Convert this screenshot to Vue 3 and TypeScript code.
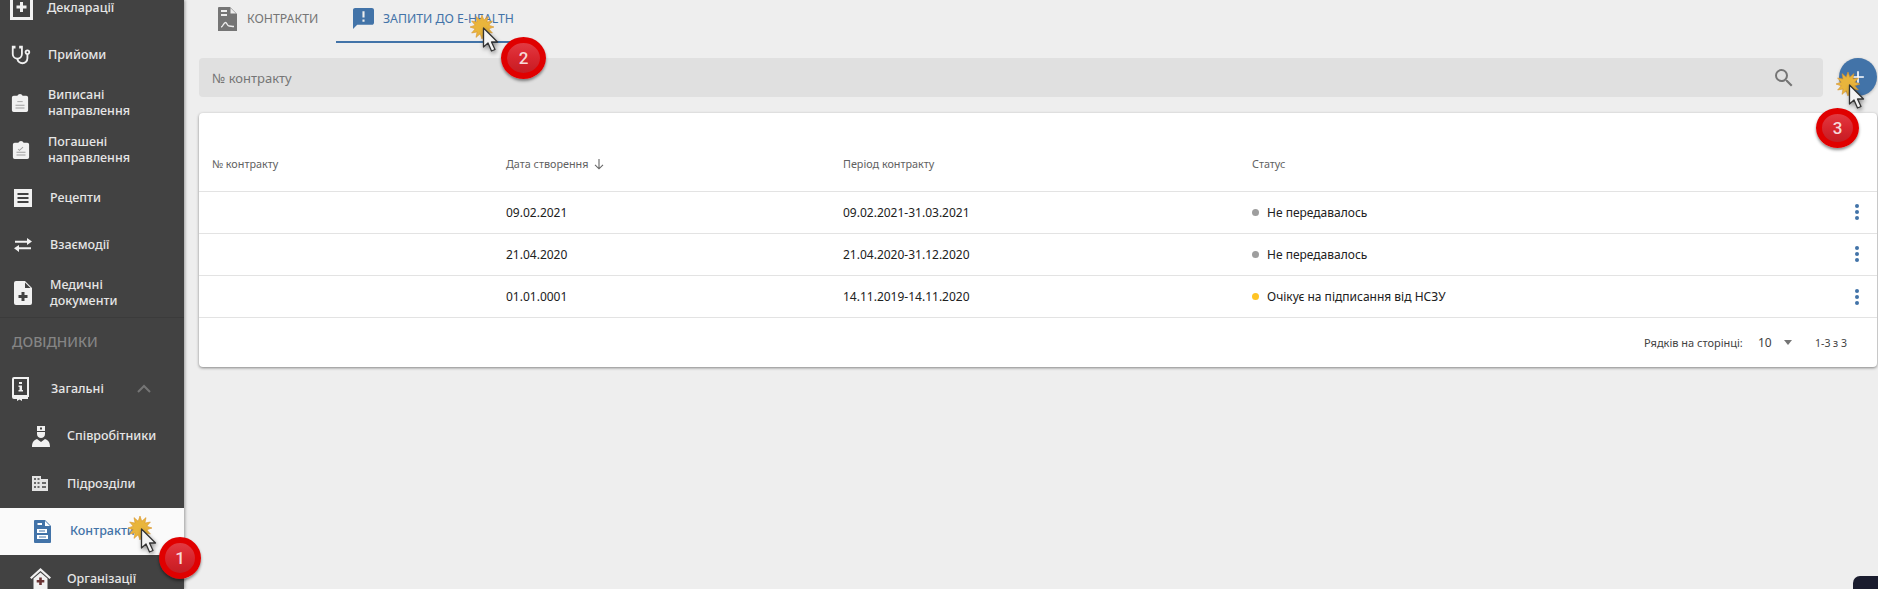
<script setup lang="ts">
interface Shape { d: string; fill: string }
interface NavIcon { box: string; w: number; h: number; shapes: Shape[] }
interface NavItem { label: string[]; pad: number; gap: number; icon: NavIcon; active?: boolean; chevron?: boolean }

const W = '#f1f1f1'
const D = '#424242'
const B = '#4273a8'

const clip: Shape[] = [
  { d: 'M12 1C10.7 1 9.6 1.84 9.18 3H5A2 2 0 0 0 3 5V19A2 2 0 0 0 5 21H19A2 2 0 0 0 21 19V5A2 2 0 0 0 19 3H14.82C14.4 1.84 13.3 1 12 1Z', fill: W },
  { d: 'M7 13H17V14H7ZM7 16H17V17H7Z', fill: '#9e9e9e' },
]

const top: NavItem[] = [
  { label: ['Декларації'], pad: 10, gap: 14, icon: { box: '0 0 23 24', w: 23, h: 24, shapes: [
    { d: 'M0 0H23V24H0Z', fill: W }, { d: 'M3 0H20V21H3Z', fill: D }, { d: 'M10 6H13V9.5H16.5V12.5H13V16H10V12.5H6.5V9.5H10Z', fill: W },
  ] } },
  { label: ['Прийоми'], pad: 10, gap: 16, icon: { box: '0 0 24 24', w: 22, h: 22, shapes: [
    { d: 'M19,8C19.56,8 20,8.43 20,9A1,1 0 0,1 19,10C18.43,10 18,9.55 18,9C18,8.43 18.43,8 19,8M2,2V11C2,13.96 4.19,16.5 7.14,16.91C7.76,19.92 10.42,22 13.5,22A6.5,6.5 0 0,0 20,15.5V11.81C21.16,11.39 22,10.29 22,9A3,3 0 0,0 19,6A3,3 0 0,0 16,9C16,10.29 16.84,11.4 18,11.81V15.41C18,17.91 16,19.91 13.5,19.91C11.5,19.91 9.82,18.7 9.22,16.9C12,16.3 14,13.8 14,11V2H10V5H12V11A4,4 0 0,1 8,15A4,4 0 0,1 4,11V5H6V2H2Z', fill: W },
  ] } },
  { label: ['Виписані', 'направлення'], pad: 11, gap: 19, icon: { box: '2 0 20 22', w: 18, h: 20, shapes: [...clip, { d: 'M9 9H15V10H9Z', fill: '#9e9e9e' }] } },
  { label: ['Погашені', 'направлення'], pad: 12, gap: 18, icon: { box: '2 0 20 22', w: 18, h: 20, shapes: [...clip, { d: 'M9 9.5L10.2 10.7L14 7.5L14.6 8.2L10.2 12L8.4 10.2Z', fill: '#9e9e9e' }] } },
  { label: ['Рецепти'], pad: 14, gap: 18, icon: { box: '0 0 18 18', w: 18, h: 18, shapes: [
    { d: 'M0 0H18V18H0Z', fill: W }, { d: 'M3.5 4H14.5V6H3.5ZM3.5 8H14.5V10H3.5ZM3.5 12H14.5V14H3.5Z', fill: D },
  ] } },
  { label: ['Взаємодії'], pad: 14, gap: 18, icon: { box: '0 0 18 14', w: 18, h: 14, shapes: [
    { d: 'M13 0L18 3.5L13 7V4.7H1V2.7H13ZM5 7V9.3H17V11.3H5V14L0 10.3Z', fill: W },
  ] } },
  { label: ['Медичні', 'документи'], pad: 14, gap: 18, icon: { box: '0 0 18 24', w: 18, h: 24, shapes: [
    { d: 'M2 0H11L18 7V22A2 2 0 0 1 16 24H2A2 2 0 0 1 0 22V2A2 2 0 0 1 2 0Z', fill: W }, { d: 'M11 1.5V7H16.5Z', fill: D },
    { d: 'M7.5 11H10.5V14H13.5V17H10.5V20H7.5V17H4.5V14H7.5Z', fill: D },
  ] } },
]

const bottom: NavItem[] = [
  { label: ['Загальні'], pad: 12, gap: 22, chevron: true, icon: { box: '0 0 17 24', w: 17, h: 24, shapes: [
    { d: 'M2 0H17V20H16V22H10V24L7.5 22.5L5 24V22H2A2 2 0 0 1 0 20V2A2 2 0 0 1 2 0Z', fill: W },
    { d: 'M2 2H15V18H2Z', fill: D },
    { d: 'M7 5H10V7H7ZM6.5 8.5H10V13H11V14.5H6.5V13H7.5V10H6.5Z', fill: W },
  ] } },
  { label: ['Співробітники'], pad: 32, gap: 17, icon: { box: '0 0 18 21', w: 18, h: 21, shapes: [
    { d: 'M5 0H13V5H5Z', fill: W }, { d: 'M5 6H13V8C13 10.5 11 12 9 12C7 12 5 10.5 5 8Z', fill: W },
    { d: 'M5 13L9 16L13 13C16 14 18 16 18 21H0C0 16 2 14 5 13Z', fill: W }, { d: 'M8 1.5H10V3.5H8Z', fill: D },
  ] } },
  { label: ['Підрозділи'], pad: 32, gap: 19, icon: { box: '0 0 16 15', w: 16, h: 15, shapes: [
    { d: 'M0 0H9V3H16V15H0Z', fill: '#e4e4e4' },
    { d: 'M2 2H4V4H2ZM5.5 2H7.5V4H5.5ZM2 6H4V8H2ZM5.5 6H7.5V8H5.5ZM10 6H14V8H10ZM2 10H4V12H2ZM5.5 10H7.5V12H5.5ZM10 10H14V12H10Z', fill: '#6a6a6a' },
  ] } },
  { label: ['Контракти'], pad: 34, gap: 19, active: true, icon: { box: '0 0 17 23', w: 17, h: 23, shapes: [
    { d: 'M1 0H11L17 6V22A1 1 0 0 1 16 23H1A1 1 0 0 1 0 22V1A1 1 0 0 1 1 0Z', fill: B },
    { d: 'M11 1V6H16Z', fill: '#fff' },
    { d: 'M3.5 3H8V5H3.5ZM3 9H13V13H3ZM5 10.5V11.5H11V10.5ZM3 15H14V19H3ZM5 16.5V17.5H12V16.5Z', fill: '#fff' },
  ] } },
  { label: ['Організації'], pad: 30, gap: 16, icon: { box: '0 0 21 21', w: 21, h: 21, shapes: [
    { d: 'M10.5 0L21 9.5L19.5 11L10.5 3L1.5 11L0 9.5Z', fill: W },
    { d: 'M3.5 10.5L10.5 4.5L17.5 10.5V21H3.5Z', fill: W },
    { d: 'M9.2 9.5H11.8V12H14.3V14.5H11.8V17H9.2V14.5H6.7V12H9.2Z', fill: '#6a3434' },
  ] } },
]

const rows = [
  { created: '09.02.2021', period: '09.02.2021-31.03.2021', status: 'Не передавалось', tone: 'grey' },
  { created: '21.04.2020', period: '21.04.2020-31.12.2020', status: 'Не передавалось', tone: 'grey' },
  { created: '01.01.0001', period: '14.11.2019-14.11.2020', status: 'Очікує на підписання від НСЗУ', tone: 'amber' },
]

const starPoints = (() => {
  const pts: string[] = []
  for (let i = 0; i < 24; i++) {
    const r = i % 2 === 0 ? 12 : 7
    const a = (Math.PI * 2 * i) / 24
    pts.push(`${(12 + r * Math.cos(a)).toFixed(2)},${(12 + r * Math.sin(a)).toFixed(2)}`)
  }
  return pts.join(' ')
})()

const marks = [
  { id: 1, cls: 'm1', n: '1' },
  { id: 2, cls: 'm2', n: '2' },
  { id: 3, cls: 'm3', n: '3' },
]
</script>

<template>
  <div class="page">
    <aside class="side">
      <nav class="nav">
        <a v-for="it in top" :key="it.label[0]" class="item" :style="{ paddingLeft: it.pad + 'px' }">
          <span class="ico" :style="{ width: it.icon.w + 'px', marginRight: it.gap + 'px' }">
            <svg :width="it.icon.w" :height="it.icon.h" :viewBox="it.icon.box"><path v-for="(s, i) in it.icon.shapes" :key="i" :d="s.d" :fill="s.fill" /></svg>
          </span>
          <span class="lbl"><span v-for="l in it.label" :key="l" class="ln">{{ l }}</span></span>
        </a>
        <div class="section">ДОВІДНИКИ</div>
        <a v-for="it in bottom" :key="it.label[0]" class="item" :class="{ active: it.active }" :style="{ paddingLeft: it.pad + 'px' }">
          <span class="ico" :style="{ width: it.icon.w + 'px', marginRight: it.gap + 'px' }">
            <svg :width="it.icon.w" :height="it.icon.h" :viewBox="it.icon.box"><path v-for="(s, i) in it.icon.shapes" :key="i" :d="s.d" :fill="s.fill" /></svg>
          </span>
          <span class="lbl"><span v-for="l in it.label" :key="l" class="ln">{{ l }}</span></span>
          <svg v-if="it.chevron" class="chev" width="14" height="9" viewBox="0 0 14 9"><path d="M1 8L7 2L13 8" fill="none" stroke="#757575" stroke-width="2" /></svg>
        </a>
      </nav>
    </aside>

    <main class="main">
      <div class="tabs">
        <div class="tab first">
          <svg width="19" height="24" viewBox="0 0 19 24"><path d="M1 0H12L19 7V24H0V1A1 1 0 0 1 1 0Z" fill="#757575" /><path d="M12.5 1V6.5H18Z" fill="#eee" /><path d="M3 3H9V5H3ZM3 7H9V9H3Z" fill="#eee" /><path d="M3 20C5 20 5.5 15.5 7.5 15.5C9 15.5 9 19 11 19C12.5 19 14 19.5 16 19.5" fill="none" stroke="#eee" stroke-width="1.4" /></svg>
          <span>КОНТРАКТИ</span>
        </div>
        <div class="tab on">
          <svg width="21" height="21" viewBox="2 2 20 20"><path d="M20 2H4c-1.1 0-1.99.9-1.99 2L2 22l4-4h14c1.1 0 2-.9 2-2V4c0-1.1-.9-2-2-2zm-7 9h-2V5h2v6zm0 4h-2v-2h2v2z" fill="#4273a8" /></svg>
          <span>ЗАПИТИ ДО E-HEALTH</span>
        </div>
      </div>

      <div class="tools">
        <div class="search">
          <span class="ph">№ контракту</span>
          <svg width="24" height="24" viewBox="0 0 24 24"><path d="M15.5 14h-.79l-.28-.27A6.47 6.47 0 0 0 16 9.5 6.5 6.5 0 1 0 9.5 16c1.61 0 3.09-.59 4.23-1.57l.27.28v.79l5 4.99L20.49 19l-4.99-5zm-6 0C7.01 14 5 11.99 5 9.5S7.01 5 9.5 5 14 7.01 14 9.5 11.99 14 9.5 14z" fill="#757575" /></svg>
        </div>
        <button class="fab" type="button">
          <svg width="20" height="20" viewBox="0 0 24 24"><path d="M19 13h-6v6h-2v-6H5v-2h6V5h2v6h6v2z" fill="#fff" /></svg>
        </button>
      </div>

      <section class="card">
        <div class="row head">
          <div class="c c1">№ контракту</div>
          <div class="c c2">Дата створення
            <svg width="12" height="12" viewBox="0 0 12 12"><path d="M6 1V10.5M2 6.8L6 10.8L10 6.8" fill="none" stroke="#666" stroke-width="1.1" /></svg>
          </div>
          <div class="c c3">Період контракту</div>
          <div class="c c4">Статус</div>
        </div>
        <div v-for="r in rows" :key="r.created" class="row body">
          <div class="c c1"></div>
          <div class="c c2">{{ r.created }}</div>
          <div class="c c3">{{ r.period }}</div>
          <div class="c c4"><i class="dot" :class="r.tone"></i>{{ r.status }}</div>
          <div class="kebab"><i></i><i></i><i></i></div>
        </div>
        <footer class="foot">
          <span class="f-l">Рядків на сторінці:</span>
          <span class="f-n">10</span>
          <i class="f-a"></i>
          <span class="f-r">1-3 з 3</span>
        </footer>
      </section>
    </main>

    <div v-for="m in marks" :key="m.id" class="mark" :class="m.cls">
      <svg class="star" width="24" height="24" viewBox="0 0 24 24"><polygon :points="starPoints" fill="#e9b53c" stroke="#d9942a" stroke-width=".6" /></svg>
      <svg class="cursor" width="18" height="26" viewBox="0 0 18 26"><path d="M1.5 1V20L6 16L9.5 24L13 22.5L9.5 15H15.5Z" fill="#f4f4f4" stroke="#333" stroke-width="1.3" stroke-linejoin="round" /></svg>
      <div class="badge"><span>{{ m.n }}</span></div>
    </div>

    <div class="corner"></div>
  </div>
</template>

<style scoped>
.page {
  position: relative;
  display: flex;
  width: 1878px;
  height: 589px;
  overflow: hidden;
  background: #eeeeee;
  font-family: "Noto Sans", "Open Sans", sans-serif;
  color: #212121;
}
.side {
  flex: 0 0 184px;
  height: 589px;
  overflow: hidden;
  background: #424242;
  box-shadow: 1px 0 3px rgba(0, 0, 0, 0.35);
  z-index: 1;
}
.nav { margin-top: -16px; }
.item {
  display: flex;
  align-items: center;
  height: 47.5px;
  color: #e6e6e6;
  font-size: 12.5px;
  font-weight: 500;
  line-height: 16px;
}
.item.active { background: #fafafa; color: #4273a8; }
.ico { display: flex; justify-content: center; flex: none; }
.lbl { display: flex; flex-direction: column; }
.ln { white-space: nowrap; }
.chev { margin-left: 33px; }
.section {
  display: flex;
  align-items: center;
  box-sizing: border-box;
  height: 48.5px;
  padding-left: 12px;
  border-top: 1px solid #3b3b3b;
  color: #858585;
  font-size: 14px;
  font-weight: 500;
}
.main {
  flex: 1;
  min-width: 0;
  padding: 0 1px 0 15px;
}
.tabs { display: flex; height: 43px; }
.tab {
  display: flex;
  align-items: center;
  box-sizing: border-box;
  height: 43px;
  padding-bottom: 5px;
  font-size: 12.3px;
  color: #757575;
}
.tab.first { width: 137px; padding-left: 19px; gap: 10px; padding-bottom: 6px; }
.tab.on {
  width: 188px;
  padding-left: 17px;
  gap: 9px;
  color: #4273a8;
  border-bottom: 2px solid #4273a8;
}
.tools { display: flex; gap: 16px; margin-top: 15px; }
.search {
  flex: 1;
  height: 39px;
  display: flex;
  align-items: center;
  justify-content: space-between;
  box-sizing: border-box;
  padding: 0 27px 0 13px;
  background: #e0e0e0;
  border-radius: 4px;
}
.ph { color: #757575; font-size: 13px; }
.fab {
  flex: none;
  width: 38px;
  height: 38px;
  padding: 0;
  border: 0;
  border-radius: 50%;
  background: #4273a8;
  display: flex;
  align-items: center;
  justify-content: center;
  box-shadow: 0 1px 3px rgba(0, 0, 0, 0.25);
}
.card {
  margin-top: 16px;
  height: 254px;
  background: #fff;
  border-radius: 4px;
  box-shadow: 0 1px 3px rgba(0, 0, 0, 0.45);
}
.row {
  display: grid;
  grid-template-columns: 294px 337px 409px 1fr;
  align-items: center;
  padding-left: 13px;
  border-bottom: 1px solid #e3e3e3;
  box-sizing: border-box;
  position: relative;
  font-size: 12px;
}
.head { height: 78.5px; font-size: 10.8px; color: #616161; padding-top: 24px; }
.body { height: 42.3px; color: #212121; }
.c { display: flex; align-items: center; white-space: nowrap; }
.head .c2 svg { margin-left: 5px; }
.dot { width: 7px; height: 7px; border-radius: 50%; margin: 0 8px 0 0; flex: none; }
.grey { background: #9e9e9e; }
.amber { background: #ffc425; }
.kebab {
  position: absolute;
  left: 1656px;
  top: 50%;
  transform: translateY(-50%);
  display: flex;
  flex-direction: column;
  gap: 2px;
}
.kebab i { width: 4px; height: 4px; border-radius: 50%; background: #4273a8; }
.foot {
  display: flex;
  align-items: center;
  height: 49px;
  padding-left: 1445px;
  font-size: 11px;
  color: #424242;
}
.f-l { width: 114px; white-space: nowrap; }
.f-n { font-size: 12px; width: 26px; }
.f-a { width: 0; height: 0; border: 4.5px solid transparent; border-top: 5px solid #757575; border-bottom: 0; margin-right: 23px; }
.f-r { font-size: 10.5px; white-space: nowrap; }

.mark { position: absolute; z-index: 3; width: 0; height: 0; }
.m1 { left: 142px; top: 529px; }
.m2 { left: 484px; top: 28px; }
.m3 { left: 1850px; top: 85px; }
.star { position: absolute; left: -14px; top: -13px; filter: blur(.4px); }
.cursor { position: absolute; left: -2px; top: -1px; filter: drop-shadow(1px 2px 2px rgba(0,0,0,.4)); }
.badge {
  position: absolute;
  width: 42px;
  height: 42px;
  border-radius: 50%;
  box-sizing: border-box;
  border: 6px solid #e00000;
  background: linear-gradient(180deg, #e23a42 0%, #d8262e 50%, #c41d24 100%);
  box-shadow: 0 2px 3px rgba(0,0,0,.45);
  display: flex;
  align-items: center;
  justify-content: center;
  color: #f7dada;
  font-family: Roboto, sans-serif;
  font-size: 17px;
  font-weight: 500;
}
.m1 .badge { left: 17px; top: 8px; }
.m2 .badge { left: 17px; top: 9px; width: 45px; height: 42px; }
.m3 .badge { left: -34px; top: 23px; width: 43px; height: 40px; }
.corner {
  position: absolute;
  right: 0;
  bottom: 0;
  width: 25px;
  height: 13px;
  background: #1a1c2e;
  border-top-left-radius: 7px;
  z-index: 3;
}
</style>
